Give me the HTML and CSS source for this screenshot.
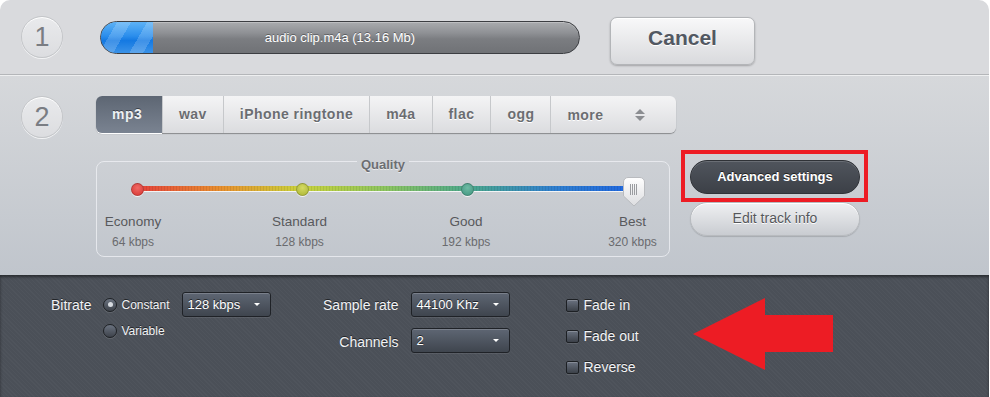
FILE: index.html
```html
<!DOCTYPE html>
<html lang="en">

<head>
    <meta charset="UTF-8">
    <meta name="viewport" content="width=device-width, initial-scale=1.0">
    <title>Audio Converter</title>
    <link rel="stylesheet" href="styles.css">
</head>

<body>
    <div class="converter">
        <div class="step step-one">
            <div class="step-num">1</div>
            <div class="progress">
                <div class="progress-fill"></div>
                <span class="progress-text">audio clip.m4a (13.16 Mb)</span>
            </div>
            <button class="cancel-btn">Cancel</button>
        </div>

        <div class="step step-two">
            <div class="step-num">2</div>
            <div class="step-body">
                <ul class="formats">
                    <li class="active">mp3</li>
                    <li>wav</li>
                    <li>iPhone ringtone</li>
                    <li>m4a</li>
                    <li>flac</li>
                    <li>ogg</li>
                    <li class="more">more <span class="updown"></span></li>
                </ul>

                <div class="options">
                    <fieldset class="quality">
                        <legend>Quality</legend>
                        <div class="track">
                            <span class="stop stop-red"></span>
                            <span class="stop stop-olive"></span>
                            <span class="stop stop-teal"></span>
                            <span class="stop stop-end"></span>
                            <svg class="thumb" width="24" height="32" viewBox="0 0 24 32">
                                <defs>
                                    <linearGradient id="thumbFill" x1="0" y1="0" x2="0" y2="1">
                                        <stop offset="0" stop-color="#ffffff" />
                                        <stop offset="1" stop-color="#dcdde0" />
                                    </linearGradient>
                                </defs>
                                <path d="M6 1.5h12a4.5 4.5 0 0 1 4.5 4.5v14l-10.5 10l-10.5-10v-14a4.5 4.5 0 0 1 4.5-4.5z"
                                    fill="url(#thumbFill)" stroke="#b9bbbf" />
                                <path d="M8.5 8v11M10.5 8v11M12.5 8v11M14.5 8v11" stroke="#9a9ca0" stroke-width="1" />
                            </svg>
                        </div>
                        <div class="levels">
                            <div class="level"><span>Economy</span><small>64 kbps</small></div>
                            <div class="level"><span>Standard</span><small>128 kbps</small></div>
                            <div class="level"><span>Good</span><small>192 kbps</small></div>
                            <div class="level"><span>Best</span><small>320 kbps</small></div>
                        </div>
                    </fieldset>

                    <div class="side-btns">
                        <div class="highlight">
                            <button class="adv-btn">Advanced settings</button>
                        </div>
                        <button class="edit-btn">Edit track info</button>
                    </div>
                </div>
            </div>
        </div>

        <div class="advanced">
            <div class="bitrate">
                <span class="field-label">Bitrate</span>
                <label class="radio-row"><span class="radio checked"></span>Constant</label>
                <div class="select select-small">128 kbps</div>
                <label class="radio-row variable"><span class="radio"></span>Variable</label>
            </div>

            <div class="audio-props">
                <span class="field-label">Sample rate</span>
                <div class="select">44100 Khz</div>
                <span class="field-label">Channels</span>
                <div class="select">2</div>
            </div>

            <div class="effects">
                <label class="check-row"><span class="check"></span>Fade in</label>
                <label class="check-row"><span class="check"></span>Fade out</label>
                <label class="check-row"><span class="check"></span>Reverse</label>
            </div>

            <svg class="pointer-arrow" width="141" height="73" viewBox="0 0 141 73">
                <polygon points="0,36 72,0 72,17 140,17 140,54 72,54 72,72" fill="#ed1c24" />
            </svg>
        </div>
    </div>
</body>

</html>
```

FILE: styles.css
```css
body {
    margin: 0;
    background: #fff;
    font-family: "Liberation Sans", Arial, sans-serif;
}

.converter {
    width: 989px;
    border-radius: 10px 10px 0 0;
    overflow: hidden;
}

.step {
    display: flex;
}

.step-one {
    height: 74px;
    align-items: center;
    background: #d9dadd;
    border-bottom: 1px solid #b4b6b9;
}

.step-two {
    height: 179px;
    padding-top: 20px;
    align-items: flex-start;
    border-top: 1px solid #eeeff0;
    background: linear-gradient(#d6d8db, #c0c5cc);
}

.step-num {
    width: 40px;
    height: 40px;
    margin-left: 21px;
    flex: none;
    border-radius: 50%;
    border: 1px solid #c4c6c9;
    background: linear-gradient(#e9eaec, #dcdde0);
    box-shadow: inset 0 1px 0 #fff, 0 1px 0 #f2f3f4;
    color: #7a7d83;
    font-size: 27px;
    line-height: 40px;
    text-align: center;
}

.progress {
    position: relative;
    width: 478px;
    height: 31px;
    margin-left: 37px;
    border: 1px solid #3c3e42;
    border-radius: 17px;
    overflow: hidden;
    background: linear-gradient(#a9abae 0%, #8f9195 35%, #7b7d81 55%, #707276 100%);
    box-shadow: inset 0 1px 0 rgba(255, 255, 255, 0.25);
    display: flex;
    align-items: center;
    justify-content: center;
}

.progress-fill {
    position: absolute;
    left: 0;
    top: 0;
    bottom: 0;
    width: 52px;
    background:
        repeating-linear-gradient(120deg, transparent 0 14px, rgba(255, 255, 255, 0.18) 14px 26px),
        linear-gradient(#5db2f6 0%, #2b8eec 45%, #1479e2 60%, #3a92e8 100%);
}

.progress-text {
    position: relative;
    color: #fff;
    font-size: 13px;
    text-shadow: 0 -1px 0 rgba(0, 0, 0, 0.35);
}

.cancel-btn {
    width: 145px;
    height: 48px;
    margin: 7px 0 0 30px;
    border: 1px solid #b3b5b8;
    border-radius: 7px;
    background: linear-gradient(#f8f8f9, #d9dadd);
    box-shadow: inset 0 1px 0 #fff, 0 1px 2px rgba(0, 0, 0, 0.25);
    color: #525862;
    font-family: inherit;
    font-size: 21px;
    font-weight: bold;
    text-shadow: 0 1px 0 #fff;
    padding: 0 0 6px;
}

.step-body {
    margin-left: 33px;
}

.formats {
    display: flex;
    width: 580px;
    height: 37px;
    margin: 0;
    padding: 0;
    list-style: none;
    border-radius: 6px;
    background: linear-gradient(#f4f4f5, #dbdcdf);
    box-shadow: 0 1px 1px rgba(0, 0, 0, 0.35);
}

.formats li {
    padding: 0 16px;
    line-height: 36px;
    font-size: 14px;
    font-weight: bold;
    letter-spacing: 0.45px;
    color: #6b6d71;
    text-shadow: 0 1px 0 #fff;
    border-left: 1px solid #c6c8cb;
}

.formats li:first-child {
    border-left: none;
}

.formats .active {
    width: 34px;
    border-radius: 6px 0 0 6px;
    background: linear-gradient(#5d6673, #7a8391);
    color: #eef0f3;
    text-shadow: 0 -1px 0 #3d434c;
    box-shadow: 0 1px 0 #fff;
}

.formats .more {
    flex: 1;
    display: flex;
    align-items: center;
}

.updown {
    margin-left: auto;
    margin-right: 15px;
    width: 10px;
    height: 12px;
    position: relative;
}

.updown::before,
.updown::after {
    content: "";
    position: absolute;
    left: 0;
    border-left: 5px solid transparent;
    border-right: 5px solid transparent;
}

.updown::before {
    top: 0;
    border-bottom: 5px solid #8b8d91;
}

.updown::after {
    bottom: 0;
    border-top: 5px solid #8b8d91;
}

.options {
    display: flex;
    align-items: flex-start;
    margin-top: 17px;
}

.quality {
    width: 574px;
    margin: 1px 0 0;
    padding: 0 0 8px;
    border: 1px solid rgba(240, 242, 245, 0.75);
    border-radius: 8px;
    box-sizing: border-box;
    height: 106px;
}

.quality legend {
    margin: 0 auto;
    padding: 6px 4px 0;
    font-size: 13px;
    font-weight: bold;
    color: #6c6e72;
    text-shadow: 0 1px 0 rgba(255, 255, 255, 0.6);
}

.track {
    position: relative;
    width: 508px;
    height: 12px;
    margin: 11px 0 0 34px;
    display: flex;
    justify-content: space-between;
    align-items: center;
}

.track::before {
    content: "";
    position: absolute;
    left: 6px;
    right: 6px;
    top: 3px;
    height: 5px;
    border-bottom: 1px solid #f3f4f5;
    background:
        repeating-linear-gradient(90deg, rgba(0, 0, 0, 0.08) 0 1px, transparent 1px 3px),
        linear-gradient(90deg, #e5413c 0%, #e8902f 17%, #c9d23b 33%, #8dc560 50%, #4aa78c 67%, #2f7fcf 84%, #1f66e0 100%);
}

.stop {
    position: relative;
    width: 11px;
    height: 11px;
    border-radius: 50%;
    border: 1px solid rgba(0, 0, 0, 0.2);
    box-shadow: 0 1px 0 #f3f4f5;
}

.stop-red {
    background: radial-gradient(circle at 50% 35%, #f06a66, #d73532);
}

.stop-olive {
    background: radial-gradient(circle at 50% 35%, #d5da62, #aab534);
}

.stop-teal {
    background: radial-gradient(circle at 50% 35%, #6fbba4, #3f9580);
}

.stop-end {
    visibility: hidden;
}

.thumb {
    position: absolute;
    right: -7px;
    top: -7px;
}

.levels {
    display: grid;
    grid-template-columns: repeat(4, 72px);
    column-gap: 94.5px;
    margin-top: 19px;
}

.level {
    display: flex;
    flex-direction: column;
    align-items: center;
}

.level span {
    font-size: 13.5px;
    line-height: 16px;
    color: #58595c;
}

.level small {
    margin-top: 5px;
    font-size: 12px;
    line-height: 14px;
    color: #6a6b6e;
}

.side-btns {
    margin-left: 11px;
    display: flex;
    flex-direction: column;
}

.highlight {
    border: 4px solid #ed1c24;
    padding: 6px 4px 4px 5px;
}

.adv-btn,
.edit-btn {
    width: 170px;
    height: 34px;
    border-radius: 17px;
    font-family: inherit;
    font-size: 13px;
    padding: 0 0 2px;
}

.adv-btn {
    border: 1px solid #2f3237;
    background: linear-gradient(#50555d, #3c4047);
    box-shadow: inset 0 1px 0 rgba(255, 255, 255, 0.15);
    color: #fff;
    font-weight: bold;
    text-shadow: 0 -1px 0 #222;
}

.edit-btn {
    margin: 0 0 0 9px;
    border: 1px solid #b8bbbf;
    background: linear-gradient(#eff0f2, #c9ccd1);
    box-shadow: inset 0 1px 0 #fff, 0 1px 1px rgba(0, 0, 0, 0.15);
    color: #55575b;
    font-size: 14px;
    text-shadow: 0 1px 0 #fff;
}

.advanced {
    position: relative;
    height: 105px;
    padding: 17px 0 0 51px;
    display: flex;
    align-items: flex-start;
    background:
        repeating-linear-gradient(45deg, rgba(255, 255, 255, 0.025) 0 1px, transparent 1px 3px),
        #4b5058;
    box-shadow: inset 0 2px 3px rgba(0, 0, 0, 0.45);
    color: #f2f3f5;
    font-size: 14px;
    text-shadow: 0 -1px 0 #23262a;
}

.field-label {
    align-self: center;
}

.bitrate {
    display: grid;
    grid-template-columns: auto auto 89px;
    grid-template-rows: 25px 16px;
    column-gap: 12px;
    row-gap: 6px;
}

.radio-row {
    display: flex;
    align-items: center;
    font-size: 12px;
}

.variable {
    grid-column: 2;
}

.radio {
    position: relative;
    width: 12px;
    height: 12px;
    margin-right: 4px;
    border-radius: 50%;
    border: 1px solid #1e2125;
    background: linear-gradient(#6b7380, #3d424a);
    box-shadow: 0 1px 0 rgba(255, 255, 255, 0.12);
}

.radio.checked::after {
    content: "";
    position: absolute;
    left: 3.5px;
    top: 3.5px;
    width: 5px;
    height: 5px;
    border-radius: 50%;
    background: #d7dbe0;
}

.select {
    position: relative;
    height: 23px;
    width: 92px;
    padding-left: 5px;
    border: 1px solid #1f2227;
    border-radius: 3px;
    background: linear-gradient(#5e6673, #3f454e);
    box-shadow: inset 0 1px 0 rgba(255, 255, 255, 0.18), 0 1px 0 rgba(255, 255, 255, 0.08);
    font-size: 13px;
    line-height: 23px;
    color: #fff;
}

.select-small {
    width: 82px;
}

.select::after {
    content: "";
    position: absolute;
    right: 10px;
    top: 10px;
    border-left: 3px solid transparent;
    border-right: 3px solid transparent;
    border-top: 3px solid #fff;
}

.audio-props {
    display: grid;
    grid-template-columns: 75px 98px;
    grid-template-rows: 25px 25px;
    column-gap: 12px;
    row-gap: 11px;
    margin-left: 53px;
}

.audio-props .field-label {
    justify-self: end;
    white-space: nowrap;
}

.audio-props .field-label:nth-of-type(2) {
    margin-top: 2px;
}

.effects {
    display: flex;
    flex-direction: column;
    gap: 11px;
    margin: 3px 0 0 57px;
}

.check-row {
    display: flex;
    align-items: center;
    height: 20px;
}

.check {
    width: 11px;
    height: 11px;
    margin-right: 5px;
    border: 1px solid #1d2024;
    border-radius: 2px;
    background: linear-gradient(#6a7280, #3c4149);
    box-shadow: inset 0 1px 0 rgba(255, 255, 255, 0.2), 0 1px 0 rgba(255, 255, 255, 0.1);
}

.pointer-arrow {
    position: absolute;
    left: 693px;
    top: 23px;
}
```
